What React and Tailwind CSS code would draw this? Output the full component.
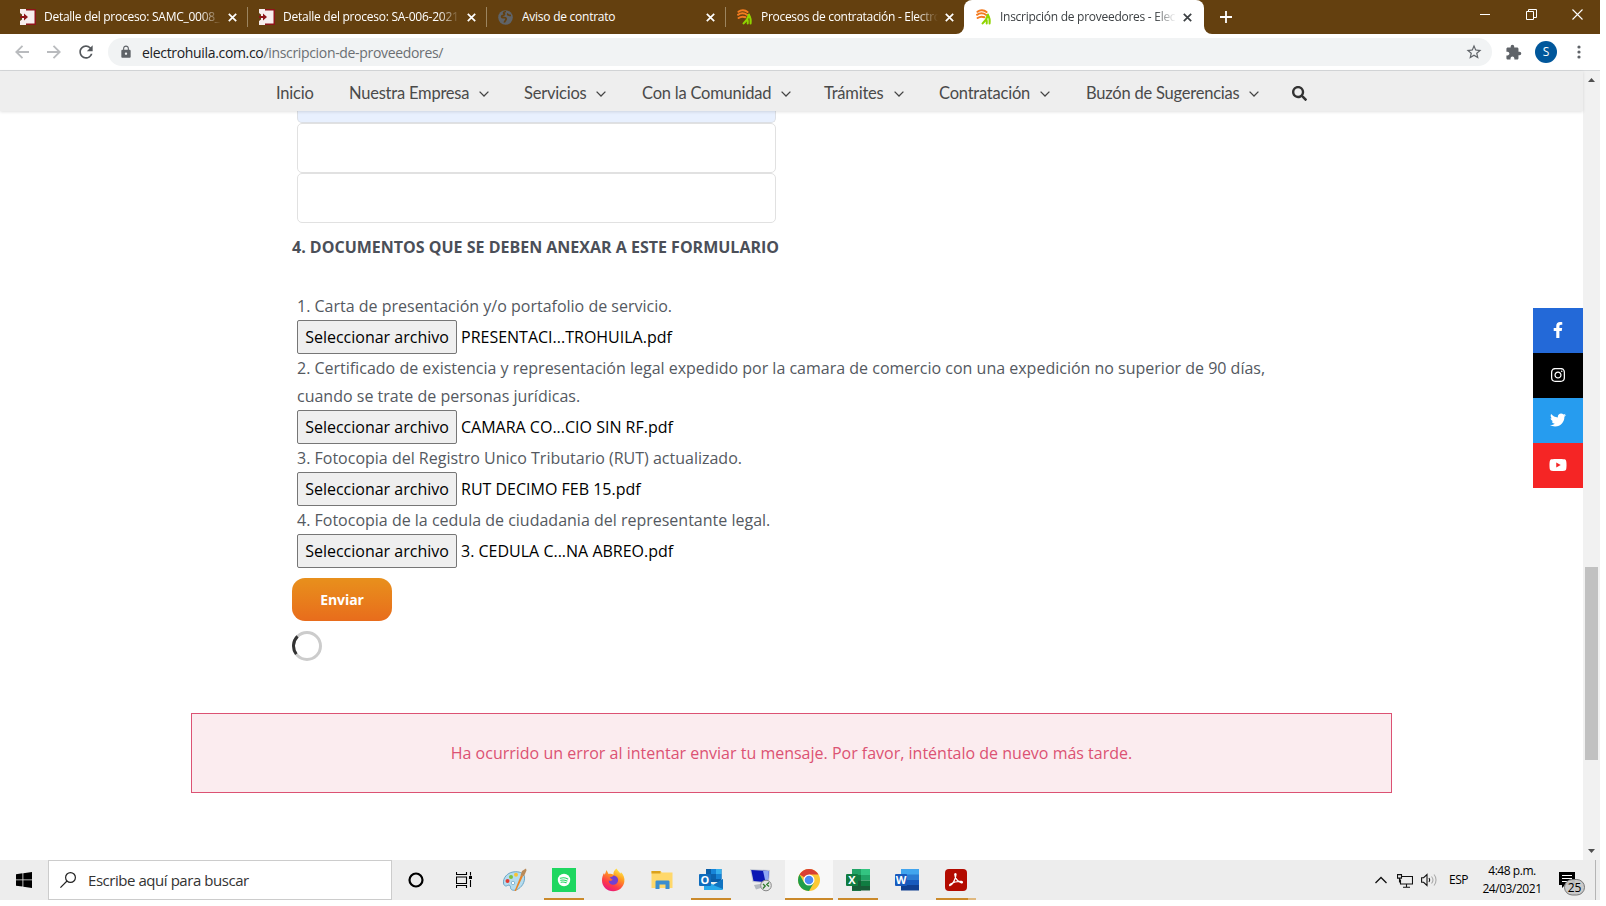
import React from 'react';
import { FaFacebookF, FaInstagram, FaTwitter, FaYoutube, FaSearch } from 'react-icons/fa';
import { MdStarBorder, MdExtension, MdLock, MdRefresh } from 'react-icons/md';

const X = ({ className = '' }) => (
  <svg className={`size-[9px] shrink-0 ${className}`} viewBox="0 0 9 9" stroke="currentColor" strokeWidth="1.7">
    <path d="M.8.8l7.4 7.4M8.2.8L.8 8.2" />
  </svg>
);

const Secop = () => (
  <svg className="h-4 w-[17px] shrink-0" viewBox="0 0 17 16">
    <rect x="4" y="0" width="12" height="16" fill="#8e1519" />
    <path d="M0 0h6v1.500h8.500v13H6V16H0v-4l2-1.500v-5L0 4z" fill="#f7eeee" />
    <path d="M0 7h4V4.500L8 8l-4 3.500V9H0z" fill="#8e1519" />
  </svg>
);

const Globe = () => (
  <svg className="size-[15px] shrink-0" viewBox="0 0 15 15">
    <circle cx="7.500" cy="7.500" r="7.300" fill="#5f6368" />
    <path d="M8 1.500c-2 .3-3 1.200-2 2 1.200.8 0 2-1.500 2.200C3 6 3.500 8 5.500 7.600c2-.3 3 .6 2.500 2-.4 1.300-1.700 1.500-1.500 3M10 3.500c-1 1.500 1 2 3 2" fill="none" stroke="#64400f" strokeWidth="1.700" />
  </svg>
);

const Huila = () => (
  <svg className="size-4 shrink-0" viewBox="0 0 16 16" fill="none" strokeLinecap="round">
    <path d="M1.500 2.800C4 .6 8 .8 10.500 3M1 5.800c2.800-1.900 6.500-1.700 9.300.2M1.600 9c2.300-1.600 4.600-1.600 6.800-.8" stroke="#f47b20" strokeWidth="2" />
    <path d="M12 5.500C11 9.500 9 12.500 6.500 14.500M12 6c1.600 2.500 2 5 1.600 8.500M10.500 10.500c.5 1.500.5 2.500.2 4" stroke="#8fd400" strokeWidth="2" />
  </svg>
);

function Tab({ icon, title, fade, tracking }) {
  return (
    <>
      <div className="flex h-full w-[238px] items-center pl-[11px] text-white">
        <div className="flex w-[24px] shrink-0">{icon}</div>
        <div className={`w-[177px] overflow-hidden whitespace-nowrap text-[12px] ${tracking} ${fade ? '[mask-image:linear-gradient(to_right,#000_88%,transparent)]' : ''}`}>{title}</div>
        <X className="ml-[7px]" />
      </div>
      <div className="h-5 w-px bg-[#9c8560]" />
    </>
  );
}

function TabBar() {
  return (
    <div className="flex h-[34px] bg-white leading-[34px]">
      <div className="flex w-[964px] items-center overflow-hidden rounded-br-[8px] bg-[#64400f] pl-[9px]">
        <Tab icon={<Secop />} title="Detalle del proceso: SAMC_0008_" fade tracking="tracking-[-0.27px]" />
        <Tab icon={<Secop />} title="Detalle del proceso: SA-006-2021" fade tracking="tracking-[-0.25px]" />
        <Tab icon={<Globe />} title="Aviso de contrato" tracking="tracking-[-0.25px]" />
        <div className="flex h-full w-[238px] shrink-0 items-center pl-[11px] text-white">
          <div className="flex w-[24px] shrink-0"><Huila /></div>
          <div className="w-[177px] overflow-hidden whitespace-nowrap text-[12px] tracking-[-0.3px] [mask-image:linear-gradient(to_right,#000_88%,transparent)]">Procesos de contratación - Electro</div>
          <X className="ml-[7px]" />
        </div>
      </div>
      <div className="w-[240px] bg-[#64400f]">
        <div className="flex h-full items-center rounded-t-[8px] bg-white pl-[12px] text-[#3c4043]">
          <div className="flex w-[24px] shrink-0"><Huila /></div>
          <div className="w-[176px] overflow-hidden whitespace-nowrap text-[12px] tracking-[-0.27px] [mask-image:linear-gradient(to_right,#000_88%,transparent)]">Inscripción de proveedores - Elec</div>
          <X className="ml-[7px]" />
        </div>
      </div>
      <div className="flex flex-1 rounded-bl-[8px] bg-[#64400f] pl-[16px] text-white">
        <svg className="mt-[11px] size-3" viewBox="0 0 12 12" stroke="currentColor" strokeWidth="1.800"><path d="M6 0v12M0 6h12" /></svg>
        <div className="ml-auto flex h-[28px] items-center">
          <svg className="w-[10px]" viewBox="0 0 10 10" stroke="currentColor"><path d="M0 5.500h10" /></svg>
          <svg className="ml-[36px] w-[11px]" viewBox="0 0 11 11" fill="none" stroke="currentColor"><path d="M.5 2.500h7v8h-7zM2.500 2.500v-2h8v8h-3" /></svg>
          <svg className="ml-[35px] mr-[17px] w-[11px]" viewBox="0 0 11 11" stroke="currentColor" strokeWidth="1.100"><path d="M.5.5l10 10M10.500.5l-10 10" /></svg>
        </div>
      </div>
    </div>
  );
}

function Toolbar() {
  return (
    <div className="flex h-[37px] items-center border-b border-[#d6d8da] bg-white">
      <svg className="ml-[15px] size-[14px]" viewBox="0 0 14 14" fill="none" stroke="#b9bbbe" strokeWidth="1.800"><path d="M14 7H1.500M7.500.8L1.300 7l6.200 6.200" /></svg>
      <svg className="ml-[18px] size-[14px]" viewBox="0 0 14 14" fill="none" stroke="#b9bbbe" strokeWidth="1.800"><path d="M0 7h12.500M6.500.8L12.700 7l-6.200 6.200" /></svg>
      <MdRefresh className="ml-[15px] size-[20px] text-[#54585c]" />
      <div className="ml-[12px] flex h-7 w-[1384px] items-center rounded-full bg-[#f1f3f4]">
        <MdLock className="ml-[11px] size-[14px] text-[#5f6368]" />
        <div className="ml-[9px] flex-1 whitespace-nowrap text-[14px] tracking-[-0.33px] text-[#202124]">electrohuila.com.co<span className="text-[#6b6f73]">/inscripcion-de-proveedores/</span></div>
        <MdStarBorder className="mr-[9px] size-[18px] text-[#5f6368]" />
      </div>
      <MdExtension className="ml-[13px] size-[17px] text-[#5f6368]" />
      <div className="ml-[13px] flex size-[22px] items-center justify-center rounded-full bg-[#01579b] text-[12px] text-white">S</div>
      <svg className="ml-[20px] h-[14px] w-[4px]" viewBox="0 0 4 14" fill="#5f6368"><circle cx="2" cy="2" r="1.600" /><circle cx="2" cy="7" r="1.600" /><circle cx="2" cy="12" r="1.600" /></svg>
    </div>
  );
}

const MENU = [
  { label: 'Inicio', w: 'w-[73px]' },
  { label: 'Nuestra Empresa', w: 'w-[175px]', sub: true },
  { label: 'Servicios', w: 'w-[118px]', sub: true },
  { label: 'Con la Comunidad', w: 'w-[182px]', sub: true },
  { label: 'Trámites', w: 'w-[115px]', sub: true },
  { label: 'Contratación', w: 'w-[147px]', sub: true },
  { label: 'Buzón de Sugerencias', w: 'w-[206px]', sub: true },
];

function Nav() {
  return (
    <nav className="relative flex h-10 items-center bg-[#eee] pl-[276px] pt-[4px] font-['Lato',sans-serif] text-[16.5px] tracking-[-0.22px] text-[#4a4a4a] shadow-[0_1px_3px_rgba(0,0,0,0.12)]">
      {MENU.map((m) => (
        <div key={m.label} className={`flex shrink-0 items-center whitespace-nowrap ${m.w}`}>
          <span>{m.label}</span>
          {m.sub && <svg className="ml-[10px] mt-[1px] h-[6px] w-[10px]" viewBox="0 0 10 6" fill="none" stroke="#444" strokeWidth="1.300"><path d="M.6.6L5 5 9.400.6" /></svg>}
        </div>
      ))}
      <FaSearch className="size-[15px] text-[#333]" />
    </nav>
  );
}

const DOCS = [
  ['1. Carta de presentación y/o portafolio de servicio.', 'PRESENTACI...TROHUILA.pdf'],
  ['2. Certificado de existencia y representación legal expedido por la camara de comercio con una expedición no superior de 90 días, cuando se trate de personas jurídicas.', 'CAMARA CO...CIO SIN RF.pdf'],
  ['3. Fotocopia del Registro Unico Tributario (RUT) actualizado.', 'RUT DECIMO FEB 15.pdf'],
  ['4. Fotocopia de la cedula de ciudadania del representante legal.', '3. CEDULA C...NA ABREO.pdf'],
];

function Page() {
  return (
    <main className="h-[749px] flex-1 overflow-hidden bg-white text-[16px] text-[#54595f]">
      <div className="pl-[297px]">
        <div className="h-[12px] w-[479px] rounded-b-[5px] border border-t-0 border-[#dcdfe4] bg-[#e8f0fe]" />
        <div className="h-[50px] w-[479px] rounded-[5px] border border-[#e1e1e1]" />
        <div className="h-[50px] w-[479px] rounded-[5px] border border-[#e1e1e1]" />
      </div>
      <h2 className="ml-[292px] mt-[10px] h-[28px] font-bold leading-[28px] text-[#4b4f58]">4. DOCUMENTOS QUE SE DEBEN ANEXAR A ESTE FORMULARIO</h2>
      <div className="ml-[297px] mt-[31px] w-[990px]">
        {DOCS.map(([label, file]) => (
          <div key={label}>
            <p className="leading-[28px]">{label}</p>
            <div className="flex h-[34px] items-center text-black">
              <button className="flex h-[34px] w-[160px] items-center justify-center whitespace-nowrap rounded-[2px] border border-[#767676] bg-[#efefef]">Seleccionar archivo</button>
              <span className="ml-[4px]">{file}</span>
            </div>
          </div>
        ))}
      </div>
      <button className="ml-[292px] mt-[10px] flex h-[43px] w-[100px] items-center justify-center rounded-[13px] bg-linear-to-b from-[#e8901c] to-[#e86c1c] text-[14px] font-bold tracking-[-0.1px] text-white">Enviar</button>
      <svg className="ml-[292px] mt-[10px] size-[30px]" viewBox="0 0 30 30" fill="none" strokeWidth="3">
        <circle cx="15" cy="15" r="13.500" stroke="#ccc" />
        <path d="M5.500 5.400A13.500 13.500 0 0 0 4.300 23.200" stroke="#333" />
      </svg>
      <div className="ml-[191px] mt-[52px] flex h-[80px] w-[1201px] items-center justify-center border border-[#dc5273] bg-[#fbecef] text-[#dc5273]">Ha ocurrido un error al intentar enviar tu mensaje. Por favor, inténtalo de nuevo más tarde.</div>
    </main>
  );
}

function Scrollbar() {
  return (
    <div className="flex w-[17px] shrink-0 flex-col items-center bg-[#f1f1f1]">
      <svg className="mt-[7px] h-[4px] w-[7px]" viewBox="0 0 7 4" fill="#505050"><path d="M0 4L3.500 0 7 4z" /></svg>
      <div className="mt-[485px] h-[193px] w-[13px] bg-[#c1c1c1]" />
      <svg className="mt-[89px] h-[4px] w-[7px]" viewBox="0 0 7 4" fill="#505050"><path d="M0 0l3.500 4L7 0z" /></svg>
    </div>
  );
}

function Social() {
  const cell = 'flex h-[45px] w-[50px] items-center justify-center pb-[1px]';
  return (
    <div className="absolute right-[17px] top-[237px] text-white">
      <div className={`${cell} bg-[#2369d8]`}><FaFacebookF className="size-[16px]" /></div>
      <div className={`${cell} bg-black`}><FaInstagram className="size-[16px]" /></div>
      <div className={`${cell} bg-[#269cef]`}><FaTwitter className="size-[16px]" /></div>
      <div className={`${cell} bg-[#f52525]`}><FaYoutube className="size-[18px]" /></div>
    </div>
  );
}

const Paint = () => (
  <svg className="size-6" viewBox="0 0 24 24">
    <path d="M10 4C4 5 0 10 .5 15c.3 3 2.500 3.500 4 2.500 2-1 3 0 3 2 0 2.500 3 3.500 6 2.300C19 19.500 22 14 21.500 9 21 5 16 3 10 4z" fill="#b5dcef" stroke="#6aa5c5" />
    <circle cx="4.500" cy="13" r="2" fill="#e03c31" /><circle cx="8" cy="9" r="2" fill="#7ac142" /><circle cx="13" cy="6.700" r="2" fill="#f6c436" /><circle cx="10" cy="15" r="1.700" fill="#fff" stroke="#6a9fc0" strokeWidth=".7" />
    <path d="M11.500 23L18 7l2 1-7 15z" fill="#e98427" /><path d="M17.500 7.500L19 3l4-2.500.5 2L21 8z" fill="#b98a58" />
  </svg>
);
const Spotify = () => (
  <svg className="size-6" viewBox="0 0 24 24"><rect width="24" height="24" fill="#1ed760" /><circle cx="12" cy="12" r="6.200" fill="#fff" /><path d="M8.300 10.200c2.500-.8 5.200-.5 7.500.7M8.700 12.300c2.200-.6 4.400-.3 6.300.7M9 14.200c1.800-.4 3.600-.2 5.200.6" fill="none" stroke="#1ed760" strokeWidth="1.100" strokeLinecap="round" /></svg>
);
const Firefox = () => (
  <svg className="size-6" viewBox="0 0 24 24">
    <defs><linearGradient id="ff" x1=".8" y1="0" x2=".25" y2="1"><stop offset="0" stopColor="#fff44f" /><stop offset=".35" stopColor="#ff9a20" /><stop offset=".7" stopColor="#ff3b47" /><stop offset="1" stopColor="#e31587" /></linearGradient></defs>
    <path d="M15.500.5c1 2 2.500 3 4 5 .5-.2.400-1 .3-1.500C22.500 6.500 24 10 23.300 14c-1 5.500-5.500 9.300-11 9.300C6 23.300 1 18.500 1 12.500c0-3 .8-5.500 2-7.500l.8 1.800L5.500 2 7.500 6c2-.6 3.500-.3 5 .8C12 4.500 13.500 1.800 15.500.5z" fill="url(#ff)" />
    <path d="M12.500 7.500c3.500.5 5 3 4.500 5.500-.5 3-3.500 4.600-6.500 3.500-2.200-.8-3-2.800-2.700-4 1.400.8 3 .5 4.200-.7-1.400-.3-2.500-1.300-3.500-2.500 1-.2 2.600-.2 4-1.800z" fill="#7140d2" />
  </svg>
);
const Folder = () => (
  <svg className="size-6" viewBox="0 0 24 24"><path d="M1.500 3h9l1.500 1.500h10.500V20h-21z" fill="#ffd86b" /><path d="M1.500 3h9v2.500h-9z" fill="#dba11b" /><path d="M5.500 21v-7.500A1.200 1.200 0 0 1 6.700 12.500h11.600a1.200 1.200 0 0 1 1.200 1V21h-4v-4.500h-6V21z" fill="#3b8ed0" /></svg>
);
const Letter = ({ x, children }) => <text x={x} y="16" textAnchor="middle" fill="#fff" fontSize="11" fontWeight="bold" fontFamily="Open Sans, sans-serif">{children}</text>;
const Outlook = () => (
  <svg className="size-6" viewBox="0 0 24 24"><rect x="7" y="1" width="15.500" height="13" fill="#0a5ea8" /><path d="M12 1h5v5h-5z" fill="#1684d8" /><path d="M17 1h5.500v5H17z" fill="#35b0ee" /><path d="M12 6h5v5h-5z" fill="#0b62ad" /><path d="M17 6h5.500v5H17z" fill="#1682d4" /><path d="M5 22V12l10 5 9-6v10a1 1 0 0 1-1 1z" fill="#28a8ea" /><path d="M14 17l10-6v10z" fill="#1173c0" /><rect y="6" width="12" height="12" rx="1" fill="#0f6cbd" /><Letter x="6">O</Letter></svg>
);
const Remote = () => (
  <svg className="size-6" viewBox="0 0 24 24"><path d="M1 1l20 1-1 13.500L3.500 14z" fill="#c6cbd6" /><path d="M2.200 2l17.600 1-.9 11.300L4.500 13z" fill="#0b17b4" /><path d="M14 2.700l5.800.3-.9 11.300-2.400-.2z" fill="#8fa8f4" /><path d="M5 17l9-1.500 1 3.500-8 2.500z" fill="#b3b8c0" /><circle cx="17" cy="17.500" r="5.300" fill="#e4e4e4" stroke="#888" /><path d="M14 16l2.200 2-2.200 2.500M20 14.500l-2.200 2 2.200 2" fill="none" stroke="#2d7b2d" strokeWidth="1.300" /></svg>
);
const Chrome = () => (
  <svg className="size-6" viewBox="0 0 24 24"><circle cx="12" cy="12" r="11" fill="#fcc934" /><path d="M12 12L2.500 6.500A11 11 0 0 1 21.500 6.500H12z" fill="#d93f32" /><path d="M2.500 6.500A11 11 0 0 0 12 23l4.800-8.300L12 12 7.200 14.700z" fill="#1e9e4b" /><circle cx="12" cy="12" r="5.500" fill="#fff" /><circle cx="12" cy="12" r="4.300" fill="#4a8af4" /></svg>
);
const Excel = () => (
  <svg className="size-6" viewBox="0 0 24 24"><path d="M6 1h9v22H6z" fill="#1c8a50" /><path d="M15 1h9v6h-9z" fill="#33c481" /><path d="M6 1h9v6H6z" fill="#21a366" /><path d="M15 7h9v5.500h-9z" fill="#21a366" /><path d="M6 7h9v5.500H6z" fill="#107c41" /><path d="M15 12.500h9V18h-9z" fill="#107c41" /><path d="M6 12.500h9V18H6zM6 18h18v4.500H6z" fill="#185c37" /><rect y="6" width="12" height="12" rx="1" fill="#107c41" /><Letter x="6">X</Letter></svg>
);
const Word = () => (
  <svg className="size-6" viewBox="0 0 24 24"><path d="M6 1h18v6H6z" fill="#41a5ee" /><path d="M6 6.500h18V12H6z" fill="#2b7cd3" /><path d="M6 12h18v5.500H6z" fill="#185abd" /><path d="M6 17h18v5.500H6z" fill="#103f91" /><rect y="6" width="12" height="12" rx="1" fill="#185abd" /><Letter x="6">W</Letter></svg>
);
const Acrobat = () => (
  <svg className="size-6" viewBox="0 0 24 24"><rect x="1" y="1" width="22" height="22" rx="4" fill="#b30b00" /><path d="M6 17.500c2.500-1 5.500-5.500 6-11 .1-1.300-1.300-1.300-1.200 0 .3 3.700 3 7 6.700 8.300 1.200.3 1.300-1.200 0-1.300-4-.3-8 .8-11 2.500-1.200.8-.9 1.800-.5 1.500z" fill="none" stroke="#fff" strokeWidth="1.300" /></svg>
);

const Slot = ({ w = 'w-[49px]', bar = 'w-10 bg-[#cb8a2b]', on, bg = '', children }) => (
  <div className={`flex h-10 shrink-0 flex-col items-center ${w} ${bg}`}>
    <div className="mt-[8px] h-[30px]">{children}</div>
    {on && <div className={`h-[2px] shrink-0 ${bar}`} />}
  </div>
);

function Taskbar() {
  return (
    <footer className="flex h-10 items-center bg-[#ededed] text-black">
      <svg className="ml-4 size-4" viewBox="0 0 16 16"><path d="M0 2.200l6.500-.9v6.200H0zM7.300 1.200L16 0v7.500H7.300zM0 8.300h6.500v6.200L0 13.700zM7.300 8.300H16V16l-8.700-1.200z" /></svg>
      <div className="ml-4 flex h-10 w-[344px] items-center border border-[#ccc] bg-white">
        <svg className="ml-[11px] size-4" viewBox="0 0 16 16" fill="none" stroke="#222" strokeWidth="1.200"><circle cx="10.500" cy="5.500" r="4.900" /><path d="M7 9L.4 15.600" /></svg>
        <span className="ml-[12px] whitespace-nowrap text-[15px] tracking-[-0.45px] text-[#333]">Escribe aquí para buscar</span>
      </div>
      <svg className="ml-[16px] size-4" viewBox="0 0 16 16" fill="none" stroke="#000" strokeWidth="2.200"><circle cx="8" cy="8" r="6.500" /></svg>
      <svg className="ml-[32px] size-4" viewBox="0 0 16 16" fill="none" stroke="#000" strokeWidth="1.100"><path d="M.5 0v2.500h10V0M.5 5h10v6.500H.5zM.5 16v-2.500h10V16M14.500 0v3.500M14.500 8v7" /><path d="M13 4h3v3h-3z" fill="#000" stroke="none" /></svg>
      <div className="ml-[18px] flex">
        <Slot w="w-[50px]"><Paint /></Slot>
        <Slot w="w-[48px]" on><Spotify /></Slot>
        <Slot w="w-[50px]"><Firefox /></Slot>
        <Slot w="w-[48px]"><Folder /></Slot>
        <Slot w="w-[50px]" on><Outlook /></Slot>
        <Slot w="w-[49px]"><Remote /></Slot>
        <Slot w="w-[48px]" bar="w-12 bg-[#cb8a2b]" on bg="bg-[#f8f8f8]"><Chrome /></Slot>
        <Slot w="w-[50px]" on><Excel /></Slot>
        <Slot w="w-[48px]"><Word /></Slot>
        <div className="flex h-10 w-[50px] flex-col pl-[5px]">
          <div className="ml-[8px] mt-[8px] h-[30px]"><Acrobat /></div>
          <div className="flex h-[2px]"><div className="w-8 bg-[#cb8a2b]" /><div className="w-2 bg-[#dfb87f]" /></div>
        </div>
      </div>
      <svg className="ml-[394px] h-[8px] w-[12px]" viewBox="0 0 12 8" fill="none" stroke="#111" strokeWidth="1.300"><path d="M.5 7L6 1.500 11.500 7" /></svg>
      <svg className="ml-[10px] mt-[1px] h-[14px] w-4" viewBox="0 0 16 14" fill="none" stroke="#111" strokeWidth="1.100"><path d="M5 2.500h10.500v7.500H3.500V5.500M9.500 10v3M6 13.300h7M.5.600h4v3.500h-4zM2.500 4v4h1" /></svg>
      <svg className="ml-[8px] h-[14px] w-4" viewBox="0 0 16 14" fill="none" stroke="#111" strokeWidth="1.100"><path d="M.6 4.700h2L6 1.500v11L2.600 9.300h-2zM8 5c.9 1.200.9 2.800 0 4" /><path d="M10.500 3.500c1.700 2 1.700 5 0 7M13 1.500c2.700 3 2.700 8 0 11" stroke="#aaa" /></svg>
      <span className="ml-[12px] w-[20px] whitespace-nowrap text-[12px] tracking-[-0.5px]">ESP</span>
      <div className="ml-[13px] flex w-[60px] flex-col items-center whitespace-nowrap text-[12px] leading-[18px] tracking-[-0.45px]"><span>4:48 p.m.</span><span>24/03/2021</span></div>
      <svg className="ml-[17px] mt-[7px] h-[24px] w-[28px]" viewBox="0 0 28 24"><path d="M0 0h16v13H6l-3 3v-3H0z" /><path d="M3 3.500h10M3 6.500h10M3 9.500h10" stroke="#fff" strokeWidth="1.200" /><rect x="5.500" y="7.500" width="20" height="15.500" rx="7.700" fill="#c8c8c8" fillOpacity=".95" stroke="#777" /><text x="15.500" y="19.500" textAnchor="middle" fontSize="12" fontFamily="Open Sans, sans-serif">25</text></svg>
      <div className="ml-[8px] h-10 w-px bg-[#b5b5b5]" />
    </footer>
  );
}

export default function App() {
  return (
    <div className="h-[906px] w-[1606px] overflow-hidden bg-white font-['Open_Sans',sans-serif]">
      <div className="flex h-[900px] w-[1600px] flex-col">
        <TabBar />
        <Toolbar />
        <div className="relative flex h-[789px] shrink-0">
          <div className="flex flex-1 flex-col">
            <Nav />
            <Page />
          </div>
          <Scrollbar />
          <Social />
        </div>
        <Taskbar />
      </div>
    </div>
  );
}
